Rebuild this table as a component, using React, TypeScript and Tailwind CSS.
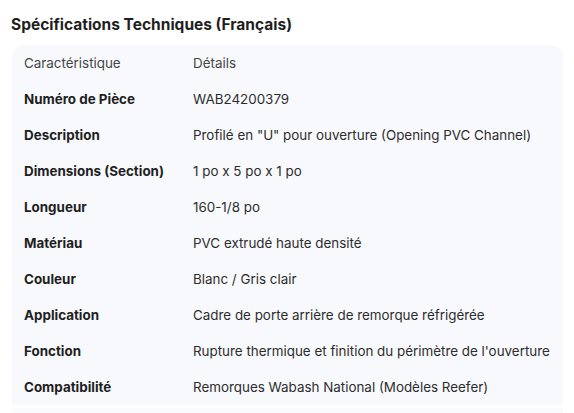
const rows: [string, string][] = [
  ["Numéro de Pièce", "WAB24200379"],
  ["Description", 'Profilé en "U" pour ouverture (Opening PVC Channel)'],
  ["Dimensions (Section)", "1 po x 5 po x 1 po"],
  ["Longueur", "160-1/8 po"],
  ["Matériau", "PVC extrudé haute densité"],
  ["Couleur", "Blanc / Gris clair"],
  ["Application", "Cadre de porte arrière de remorque réfrigérée"],
  ["Fonction", "Rupture thermique et finition du périmètre de l'ouverture"],
  ["Compatibilité", "Remorques Wabash National (Modèles Reefer)"],
];

export default function App() {
  return (
    <div className="w-[574px] h-[413px] overflow-hidden bg-white font-['Inter',sans-serif] text-[#1f1f1f]">
      <h2 className="pl-[11px] pt-[14px] h-[45px] text-[15.5px] font-bold leading-[22px]">
        Spécifications Techniques (Français)
      </h2>
      <div className="mx-3 w-[551px]">
        <table className="w-full bg-[#f8f9fc] rounded-t-xl text-[13.4px] leading-[18px] border-separate border-spacing-0">
          <thead>
            <tr className="h-9">
              <th className="pl-3 w-[181px] text-left font-normal text-[#444746]">Caractéristique</th>
              <th className="text-left font-normal text-[#444746]">Détails</th>
            </tr>
          </thead>
          <tbody>
            {rows.map(([k, v]) => (
              <tr key={k} className="h-9">
                <td className="pl-3 font-bold">{k}</td>
                <td className="text-[#2d2d2d]">{v}</td>
              </tr>
            ))}
          </tbody>
        </table>
        <div className="mt-[3px] h-2 bg-[#fafbfd]" />
      </div>
    </div>
  );
}
